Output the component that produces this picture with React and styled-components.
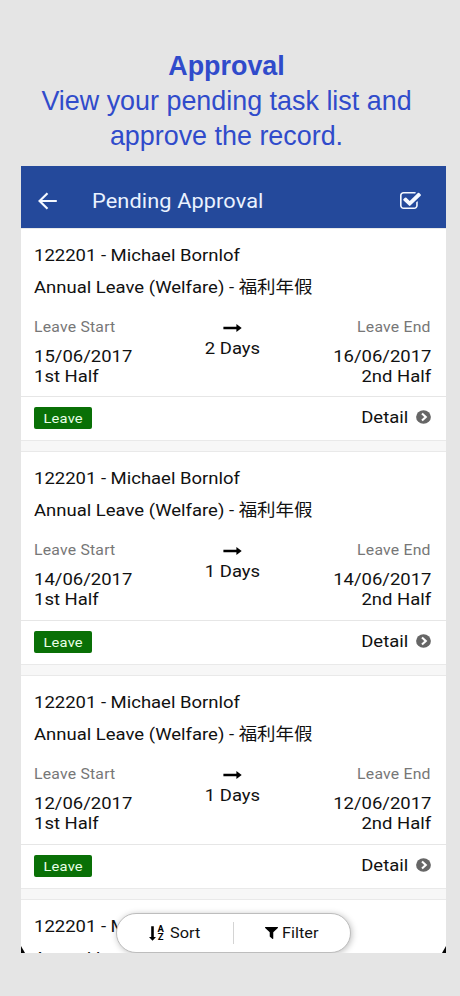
import React from "react";
import styled, { createGlobalStyle } from "styled-components";

const leaves = [
  { start: "15/06/2017", end: "16/06/2017", days: 2 },
  { start: "14/06/2017", end: "14/06/2017", days: 1 },
  { start: "12/06/2017", end: "12/06/2017", days: 1 },
  { start: "11/06/2017", end: "11/06/2017", days: 1 },
];

const BackIcon = () => (
  <svg width="20" height="18" viewBox="0 0 20 18" fill="none">
    <path
      d="M9.5 1.3 1.6 9l7.9 7.7M1.8 9h17"
      stroke="#f4f8ff"
      strokeWidth="2.2"
    />
  </svg>
);

const CheckIcon = () => (
  <svg
    width="21"
    height="17"
    viewBox="64 128 1664 1408"
    preserveAspectRatio="none"
    fill="#f4f8ff"
  >
    <path d="M1472 930v318q0 119-84.5 203.5t-203.5 84.5h-832q-119 0-203.5-84.5t-84.5-203.5v-832q0-119 84.5-203.5t203.5-84.5h832q63 0 117 25 15 7 18 23 3 17-9 29l-49 49q-10 10-23 10-3 0-9-2-23-6-45-6h-832q-66 0-113 47t-47 113v832q0 66 47 113t113 47h832q66 0 113-47t47-113v-254q0-13 9-22l64-64q10-10 23-10 6 0 12 3 20 8 20 29zm231-489l-814 814q-24 24-57 24t-57-24l-430-430q-24-24-24-57t24-57l110-110q24-24 57-24t57 24l263 263 647-647q24-24 57-24t57 24l110 110q24 24 24 57t-24 57z" />
  </svg>
);

const LongArrowIcon = () => (
  <svg width="19" height="8" viewBox="0 0 19 8">
    <path d="M.4 2.8h13V.1L18.7 4l-5.3 3.9V5.2H.4z" fill="#000" />
  </svg>
);

const ChevronIcon = () => (
  <svg width="15" height="14" viewBox="0 0 15 14">
    <ellipse cx="7.5" cy="7" rx="7.4" ry="6.8" fill="#666" />
    <path
      d="M6 3.5 9.8 7 6 10.5"
      stroke="#fff"
      strokeWidth="2.1"
      fill="none"
    />
  </svg>
);

const DownIcon = () => (
  <svg width="7" height="15" viewBox="0 0 7 15">
    <path d="M2.2.3h2.6v10.6h2.2L3.5 14.7 0 10.9h2.2z" fill="#000" />
  </svg>
);

const FilterIcon = () => (
  <svg
    width="13"
    height="12"
    viewBox="0 256 1408 1408"
    preserveAspectRatio="none"
  >
    <path d="M1403 295q17 41-14 70l-493 493v742q0 42-39 59-13 5-25 5-27 0-45-19l-256-256q-19-19-19-45v-486l-493-493q-31-29-14-70 17-39 59-39h1280q42 0 59 39z" />
  </svg>
);

const LeaveCard = ({ start, end, days }) => (
  <Card>
    <Info>
      <Line>122201 - Michael Bornlof</Line>
      <Line>Annual Leave (Welfare) - 福利年假</Line>
      <Period>
        <Side>
          <Caption>Leave Start</Caption>
          <Value>{start}</Value>
          <Value>1st Half</Value>
        </Side>
        <Duration>
          <LongArrowIcon />
          <Value $origin="center">{days} Days</Value>
        </Duration>
        <Side $end>
          <Caption $origin="right">Leave End</Caption>
          <Value $origin="right">{end}</Value>
          <Value $origin="right">2nd Half</Value>
        </Side>
      </Period>
    </Info>
    <Footer>
      <Badge>
        <BadgeText>Leave</BadgeText>
      </Badge>
      <Detail>
        <Value $origin="right">Detail</Value>
        <ChevronIcon />
      </Detail>
    </Footer>
  </Card>
);

const App = () => (
  <Page>
    <GlobalStyle />
    <Intro>
      <Title>Approval</Title>
      <Para>
        View your pending task list and
        <br />
        approve the record.
      </Para>
    </Intro>
    <Phone>
      <Header>
        <BackIcon />
        <HeaderTitle>Pending Approval</HeaderTitle>
        <CheckIcon />
      </Header>
      <List>
        {leaves.map((leave) => (
          <LeaveCard key={leave.start} {...leave} />
        ))}
      </List>
      <Toolbar>
        <Action>
          <DownIcon />
          <Letters>
            <span>A</span>
            <span>Z</span>
          </Letters>
          <ActionText>Sort</ActionText>
        </Action>
        <Separator />
        <Action $wide>
          <FilterIcon />
          <ActionText>Filter</ActionText>
        </Action>
      </Toolbar>
      <Corner />
      <Corner $right />
    </Phone>
  </Page>
);

export default App;

const GlobalStyle = createGlobalStyle`
  * {
    box-sizing: border-box;
  }

  body {
    margin: 0;
    background: #e5e5e5;
  }

  svg {
    display: block;
    flex: none;
  }
`;

const Page = styled.main`
  width: 460px;
  height: 996px;
  padding: 48px 14px 0 21px;
  background: #e5e5e5;
  overflow: hidden;
  font-family: Roboto, "Noto Sans CJK SC", sans-serif;
`;

const Intro = styled.header`
  height: 118px;
  padding-top: 1px;
  margin-right: -4px;
  margin-left: -18px;
  color: #304bcb;
  font-family: "Liberation Sans", Arial, sans-serif;
  font-size: 26.9px;
  line-height: 35px;
  text-align: center;
`;

const Title = styled.h1`
  margin: 0;
  font-size: inherit;
  font-weight: 700;
`;

const Para = styled.p`
  margin: 0;
`;

const Phone = styled.section`
  position: relative;
  height: 787px;
  background: #fff;
  overflow: hidden;
`;

const Header = styled.div`
  display: flex;
  align-items: center;
  height: 62.5px;
  padding: 7px 25px 0 17px;
  background: #24499b;
`;

/* The interface type is slightly wide, so every label is stretched. */
const Text = styled.span`
  display: block;
  width: max-content;
  color: #111;
  white-space: nowrap;
  transform: scaleX(1.087);
  transform-origin: ${({ $origin }) => $origin || "left"} center;
`;

const HeaderTitle = styled(Text)`
  margin: 0 auto 0 34px;
  color: #eaf2ff;
  font-size: 20px;
  letter-spacing: 0.1px;
`;

const List = styled.div`
  display: flex;
  flex-direction: column;
  gap: 12.25px;
  background: #f7f7f7;
`;

const Card = styled.article`
  flex: none;
  height: 211.5px;
  background: #fff;
  box-shadow: 0 0 0 1px #e9e9e9;
`;

const Info = styled.div`
  height: 168.5px;
  padding: 10px 15px 0 13px;
  border-bottom: 1px solid #e6e6e6;
`;

const Line = styled(Text)`
  height: 32px;
  font-size: 17px;
  line-height: 32px;
`;

const Period = styled.div`
  display: grid;
  grid-template-columns: 1fr auto 1fr;
  padding-top: 14px;
`;

const Side = styled.div`
  display: flex;
  flex-direction: column;
  align-items: ${({ $end }) => ($end ? "flex-end" : "flex-start")};
`;

const Caption = styled(Text)`
  height: 29px;
  color: #777;
  font-size: 14.5px;
  line-height: 21px;
  letter-spacing: 0.2px;
`;

const Value = styled(Text)`
  font-size: 17px;
  line-height: 20px;
`;

const Duration = styled.div`
  display: flex;
  flex-direction: column;
  align-items: center;
  gap: 6px;
  padding-top: 7px;
`;

const Footer = styled.div`
  display: flex;
  align-items: center;
  justify-content: space-between;
  height: 42px;
  padding: 0 15px 0 13px;
`;

const Badge = styled.span`
  display: flex;
  align-items: center;
  justify-content: center;
  width: 58px;
  height: 22px;
  border-radius: 2px;
  background: #097006;
`;

const BadgeText = styled(Text).attrs({ $origin: "center" })`
  color: #e8ffe8;
  font-size: 13.5px;
  letter-spacing: 0.2px;
`;

const Detail = styled.div`
  display: flex;
  align-items: center;
  gap: 8px;
  height: 20px;
  margin-bottom: 2px;
`;

const Toolbar = styled.div`
  position: absolute;
  bottom: 0;
  left: 95px;
  display: flex;
  align-items: center;
  width: 235px;
  height: 40px;
  border: 1px solid #bdbdbd;
  border-radius: 20px;
  background: #fff;
  box-shadow: 1px 1px 6px rgba(0, 0, 0, 0.25);
`;

const Action = styled.div`
  display: flex;
  align-items: center;
  justify-content: center;
  gap: ${({ $wide }) => ($wide ? "4px" : "1px")};
  flex: 1;
  padding-right: 4px;
`;

const ActionText = styled(Text)`
  font-size: 15px;
  line-height: 20px;
`;

const Letters = styled.span`
  display: flex;
  flex-direction: column;
  align-items: center;
  width: 8px;
  margin-right: 4px;
  font-size: 9.5px;
  font-weight: 700;
  line-height: 8px;
`;

const Separator = styled.span`
  width: 1px;
  height: 22px;
  background: #d4d4d4;
`;

const Corner = styled.span`
  position: absolute;
  bottom: 0;
  ${({ $right }) => ($right ? "right: 0;" : "left: 0;")}
  width: 4px;
  height: 7px;
  background: #050505;
  clip-path: ${({ $right }) =>
    $right
      ? "polygon(100% 0, 100% 100%, 0 100%)"
      : "polygon(0 0, 100% 100%, 0 100%)"};
`;
